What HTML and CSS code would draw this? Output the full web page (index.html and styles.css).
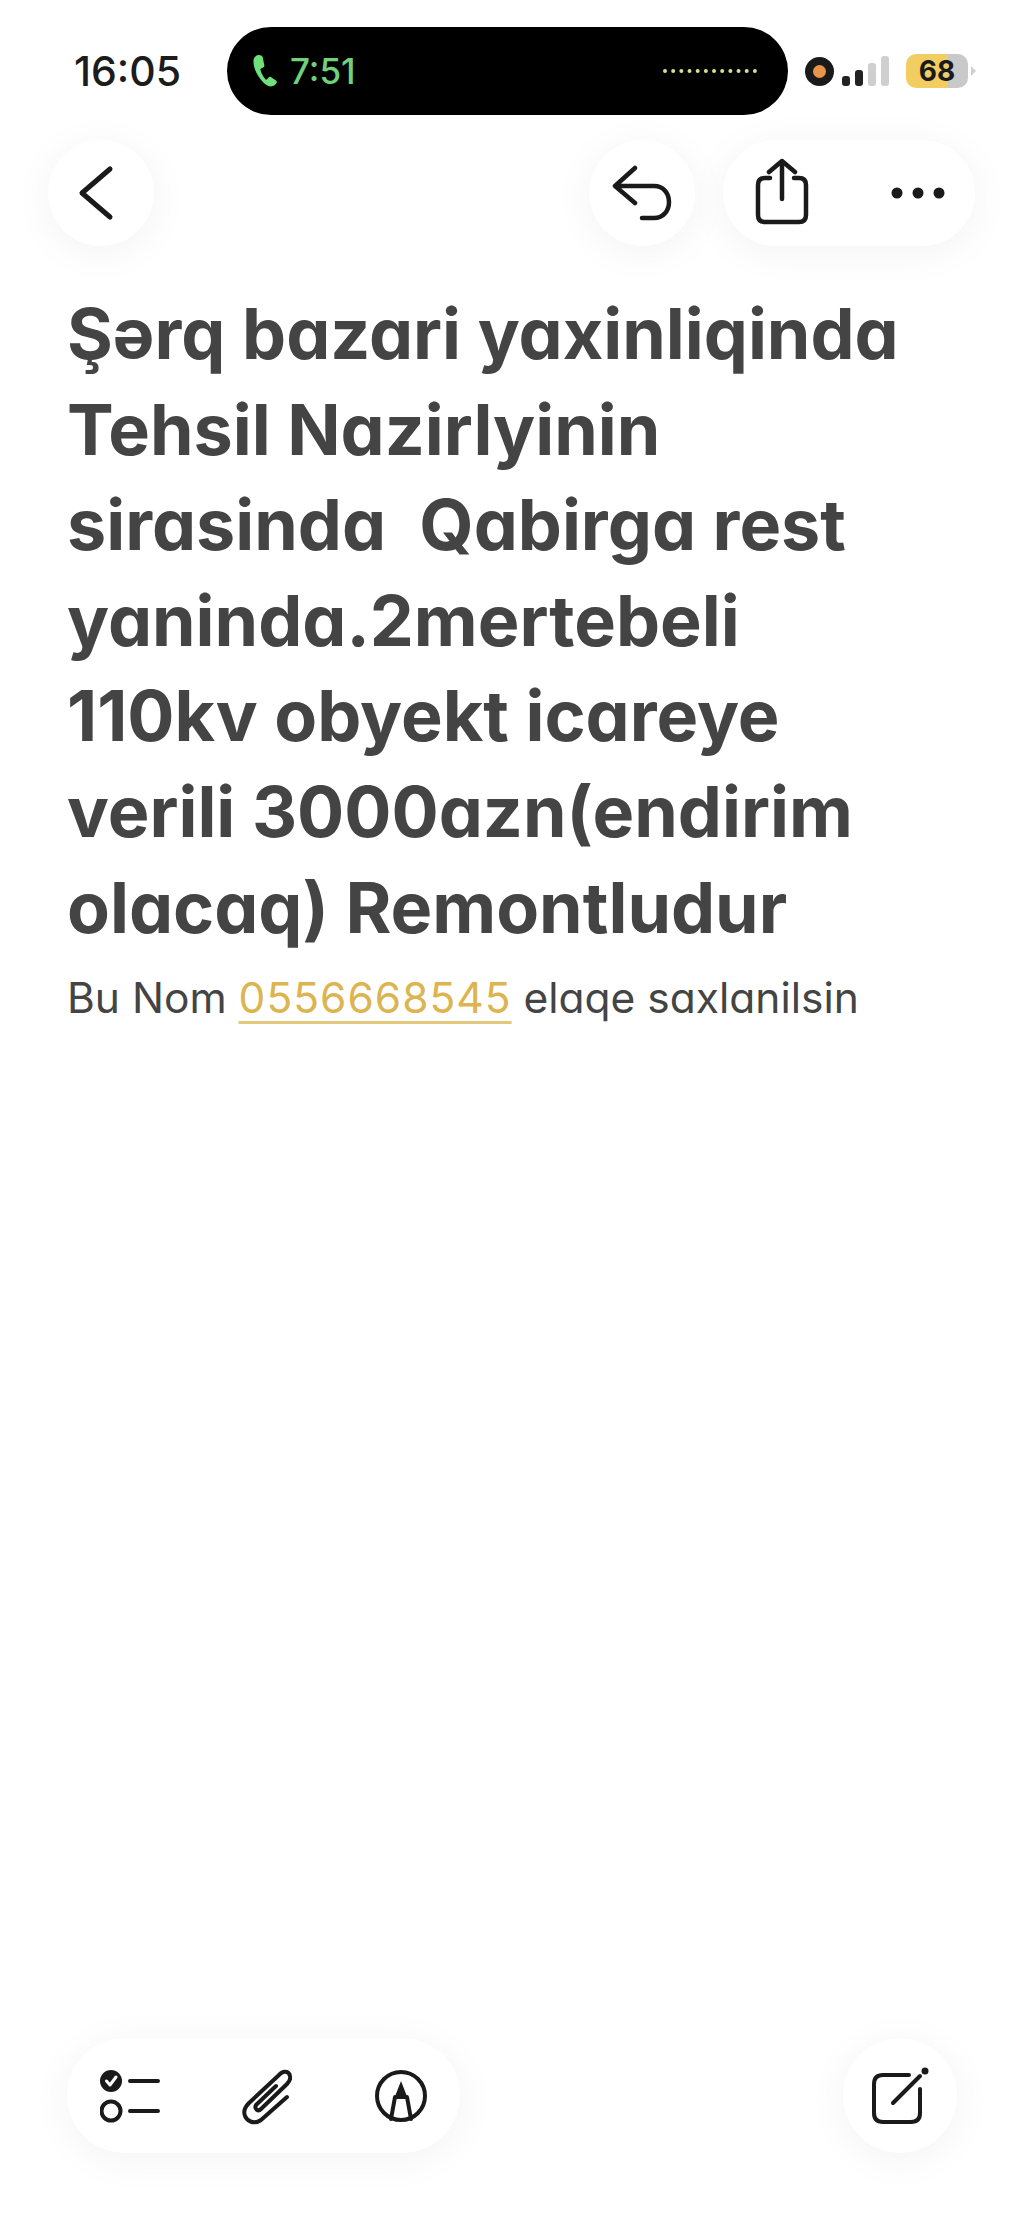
FILE: index.html
```html
<!DOCTYPE html>
<html lang="en">

<head>
  <meta charset="UTF-8" />
  <meta name="viewport" content="width=device-width, initial-scale=1.0" />
  <title>Notes</title>
  <link rel="stylesheet" href="styles.css">
</head>

<body>
  <header class="status">
    <span class="time">16:05</span>
    <div class="island">
      <svg class="phone" viewBox="0 0 28 36"><path d="M5 2c-2 1-3.500 3-3.500 6 0 6 3 13 7 18 3 4 7 8 11 8 2.500 0 5-1.500 6-3.500 .5-1 .2-2-.6-2.600l-5-3.500c-1-.6-2-.5-2.700.3l-1.500 1.800c-.5.5-1 .5-1.500.2-2.500-2.500-4.500-6-5.500-10-.1-.6.1-1 .7-1.300l2.200-1c1-.4 1.400-1.400 1.200-2.400L11 3.500C10.600 1.800 7 .8 5 2z" /></svg>
      <span class="call-time">7:51</span>
      <span class="wave"></span>
    </div>
    <div class="indicators">
      <span class="rec"></span>
      <span class="signal"><i class="on s1"></i><i class="on s2"></i><i class="s3"></i><i class="s4"></i></span>
      <span class="battery"><b>68</b></span>
      <span class="cap"></span>
    </div>
  </header>

  <nav class="topbar">
    <button class="glass round">
      <svg class="icon" width="48" height="60" viewBox="0 0 48 60"><path d="M33 6 L5 30 L33 54" /></svg>
    </button>
    <div class="topbar-right">
      <button class="glass round">
        <svg class="icon thin" width="60" height="60" viewBox="0 0 60 60"><path d="M23 5 L3 23 L23 40 M3 23 H42 C62 23 62 55 42 55 H30" /></svg>
      </button>
      <div class="glass actions">
        <svg class="icon thin" width="56" height="70" viewBox="0 0 56 70"><path d="M28 3 V41 M15 14 L28 3 L41 14 M16 20 H11 Q4 20 4 27 V57 Q4 64 11 64 H45 Q52 64 52 57 V27 Q52 20 45 20 H40" /></svg>
        <svg class="dots" width="54" height="14" viewBox="0 0 54 14"><circle cx="6" cy="7" r="5.500" /><circle cx="27" cy="7" r="5.500" /><circle cx="48" cy="7" r="5.500" /></svg>
      </div>
    </div>
  </nav>

  <main class="note">
    <h1>Şərq bazari yaxinliqinda Tehsil Nazirlyinin sirasinda&nbsp; Qabirga rest yaninda.2mertebeli 110kv obyekt icareye verili 3000azn(endirim olacaq) Remontludur</h1>
    <p>Bu Nom <a href="#">0556668545</a> elaqe saxlanilsin</p>
  </main>

  <footer class="toolbar">
    <div class="glass tools">
      <svg class="icon small" width="60" height="54" viewBox="0 0 60 54">
        <circle class="fill" cx="11" cy="12" r="11" />
        <path class="tick" d="M6.500 12 L10 16 L16 8" />
        <path d="M30 12 H58 M30 42 H58" />
        <circle cx="11" cy="42" r="9.500" />
      </svg>
      <svg class="icon small" width="50" height="58" viewBox="0 0 50 58"><path d="M45 30 L19 53 C12 58 5 54 3 49 C1 44 3 40 7 36 L37 8 C41 3 47 4 48 9 C49 13 47 15 45 17 L19 42 C16 45 12 42 14 38 L34 19" /></svg>
      <svg class="icon small" width="54" height="54" viewBox="0 0 54 54">
        <circle cx="27" cy="27" r="24" />
        <path d="M17 50 L21 28 M37 50 L33 28" />
        <path class="fill" d="M27 12 L34 30 L20 30 Z" />
      </svg>
    </div>
    <div class="glass round edit">
      <svg class="icon small" width="58" height="58" viewBox="0 0 58 58">
        <path d="M38 8 H12 Q3 8 3 17 V46 Q3 55 12 55 H40 Q49 55 49 46 V22" />
        <path d="M22 36 L49 9" />
        <circle class="fill" cx="54" cy="4" r="3.500" />
      </svg>
    </div>
  </footer>
</body>

</html>
```

FILE: styles.css
```css
* {
  margin: 0;
  padding: 0;
  box-sizing: border-box;
}

body {
  font-family: 'Inter', 'Liberation Sans', sans-serif;
  background: #fff;
  color: #444;
  height: 2220px;
  display: flex;
  flex-direction: column;
  overflow: hidden;
}

/* status bar */
.status {
  display: flex;
  align-items: center;
  height: 88px;
  margin-top: 27px;
  padding-left: 74px;
}

.time {
  width: 153px;
  font-size: 41px;
  font-weight: 500;
  color: #1c1c1c;
}

.island {
  width: 561px;
  height: 88px;
  background: #000;
  border-radius: 44px;
  display: flex;
  align-items: center;
  padding: 0 31px 0 25px;
}

.phone {
  width: 27px;
  height: 36px;
  fill: #6fe07a;
}

.call-time {
  margin-left: 11px;
  font-size: 35px;
  font-weight: 500;
  color: #6fd27a;
}

.wave {
  margin-left: auto;
  width: 94px;
  height: 0;
  border-top: 4px dotted #d6e28a;
}

.indicators {
  display: flex;
  align-items: center;
  margin-left: 17px;
}

.rec {
  width: 29px;
  height: 29px;
  border-radius: 50%;
  background: #e8954a;
  border: 8px solid #1a1a1a;
}

.signal {
  display: flex;
  align-items: flex-end;
  gap: 5px;
  height: 30px;
  margin-left: 8px;
}

.signal i {
  width: 8px;
  background: #cfcfcf;
  border-radius: 3px;
}

.signal .on {
  background: #222;
}

.s1 { height: 10px; }
.s2 { height: 16px; }
.s3 { height: 23px; }
.s4 { height: 30px; }

.battery {
  width: 62px;
  height: 34px;
  margin-left: 17px;
  border-radius: 10px;
  background: linear-gradient(90deg, #f2cd62 68%, #c9c9c9 68%);
  display: flex;
  align-items: center;
  justify-content: center;
}

.battery b {
  font-size: 28px;
  font-weight: 700;
  color: #1a1a1a;
}

.cap {
  margin-left: 3px;
  border-left: 5px solid #d2d2d2;
  border-top: 5px solid transparent;
  border-bottom: 5px solid transparent;
}

/* nav buttons */
.glass {
  background: #fff;
  border: none;
  box-shadow: 0 6px 40px rgba(0, 0, 0, 0.05);
  display: flex;
  align-items: center;
}

.round {
  width: 106px;
  height: 106px;
  border-radius: 50%;
  justify-content: center;
}

.topbar {
  display: flex;
  justify-content: space-between;
  margin-top: 25px;
  padding: 0 49px 0 48px;
}

.topbar-right {
  display: flex;
  gap: 28px;
}

.actions {
  width: 252px;
  height: 106px;
  border-radius: 53px;
  padding: 0 30px 0 31px;
  justify-content: space-between;
}

.icon {
  fill: none;
  stroke: #1a1a1a;
  stroke-width: 5;
  stroke-linecap: round;
  stroke-linejoin: round;
}

.icon.thin {
  stroke-width: 4.500;
}

.icon.small {
  stroke-width: 4;
}

.icon .fill {
  fill: #1a1a1a;
  stroke: none;
}

.icon .tick {
  stroke: #fff;
  stroke-width: 3;
}

.dots {
  fill: #1a1a1a;
}

/* note text */
.note {
  padding: 40px 100px 0 67px;
  font-feature-settings: 'cv11' 1;
}

h1 {
  font-size: 70px;
  font-weight: 700;
  line-height: 95.6px;
  color: #444;
}

.note p {
  margin-top: 14px;
  font-size: 42.5px;
  line-height: 58px;
  font-weight: 400;
}

.note a {
  color: #dcb450;
  letter-spacing: 1px;
  text-decoration: underline;
  text-decoration-color: #e3c77a;
  text-decoration-thickness: 3px;
  text-underline-offset: 8px;
}

/* bottom toolbar */
.toolbar {
  margin-top: auto;
  margin-bottom: 67px;
  display: flex;
  justify-content: space-between;
  padding: 0 67px;
}

.tools {
  width: 393px;
  height: 115px;
  border-radius: 58px;
  padding: 0 32px 0 33px;
  justify-content: space-between;
}

.edit {
  width: 114px;
  height: 115px;
}
```
